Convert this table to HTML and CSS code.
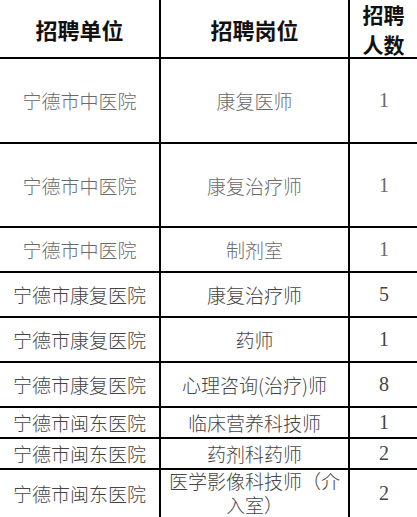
FILE: index.html
```html
<!DOCTYPE html>
<html lang="zh-CN">
<head>
<meta charset="utf-8">
<title>招聘岗位</title>
<link rel="stylesheet" href="styles.css">
</head>
<body>
<div class="jobs">
  <div class="cell head">招聘单位</div>
  <div class="cell head">招聘岗位</div>
  <div class="cell head num-head">招聘<br>人数</div>

  <div class="cell light">宁德市中医院</div>
  <div class="cell light">康复医师</div>
  <div class="cell light num">1</div>

  <div class="cell light">宁德市中医院</div>
  <div class="cell light">康复治疗师</div>
  <div class="cell light num">1</div>

  <div class="cell light">宁德市中医院</div>
  <div class="cell light">制剂室</div>
  <div class="cell light num">1</div>

  <div class="cell">宁德市康复医院</div>
  <div class="cell">康复治疗师</div>
  <div class="cell num">5</div>

  <div class="cell">宁德市康复医院</div>
  <div class="cell">药师</div>
  <div class="cell num">1</div>

  <div class="cell">宁德市康复医院</div>
  <div class="cell">心理咨询(治疗)师</div>
  <div class="cell num">8</div>

  <div class="cell">宁德市闽东医院</div>
  <div class="cell">临床营养科技师</div>
  <div class="cell num">1</div>

  <div class="cell">宁德市闽东医院</div>
  <div class="cell">药剂科药师</div>
  <div class="cell num">2</div>

  <div class="cell">宁德市闽东医院</div>
  <div class="cell two-line">医学影像科技师（介<br>入室）</div>
  <div class="cell num">2</div>
</div>
</body>
</html>
```
FILE: styles.css
```css
html, body {
  margin: 0;
  padding: 0;
  background: #fff;
}
body {
  width: 417px;
  height: 517px;
  overflow: hidden;
}
.jobs {
  display: grid;
  grid-template-columns: 161px 189px 67px;
  grid-template-rows: 59px 85px 84px 45px 45px 45px 45px 31px 31px 49px;
  width: 417px;
  font-family: "Noto Sans CJK SC", "Liberation Serif", serif;
}
.cell {
  box-sizing: border-box;
  display: flex;
  align-items: center;
  justify-content: center;
  text-align: center;
  border-right: 2px solid #000;
  border-bottom: 2px solid #000;
  font-size: 19px;
  font-weight: 300;
  line-height: 25px;
  color: #444;
  white-space: nowrap;
}
.cell:nth-child(3n) {
  border-right: none;
}
.cell.light {
  color: #6a6a6a;
}
.cell.head {
  font-size: 22px;
  font-weight: 700;
  line-height: 30px;
  color: #111;
}
.cell.num-head {
  font-size: 21px;
}
.cell.num {
  font-family: "Liberation Serif", "Noto Sans CJK SC", serif;
  font-size: 20px;
  padding-left: 1px;
}
.cell.two-line {
  line-height: 24px;
  padding-bottom: 1px;
}
```
